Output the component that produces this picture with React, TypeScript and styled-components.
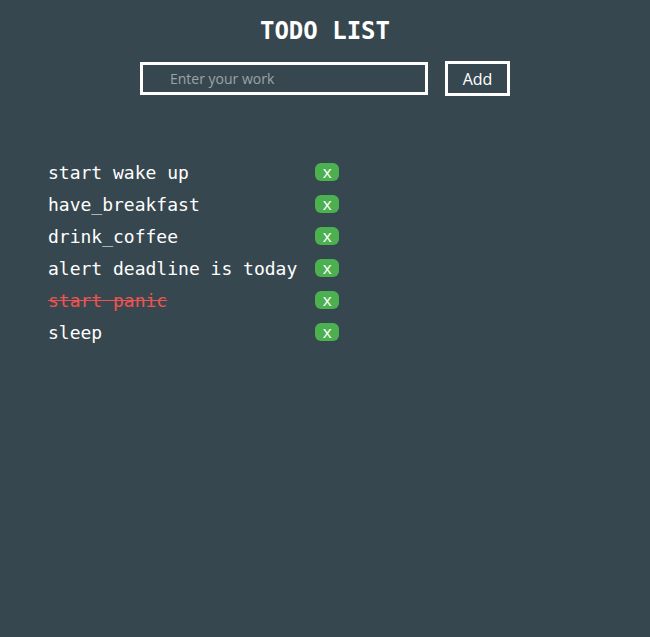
import { useState } from "react";
import styled, { createGlobalStyle } from "styled-components";

const GlobalStyle = createGlobalStyle`
  html, body {
    margin: 0;
    padding: 0;
    background-color: #37474f;
  }
  #root {
    min-height: 100vh;
  }
`;

const Wrapper = styled.div`
  min-height: 100vh;
  background-color: #37474f;
  color: #ffffff;
  display: flex;
  flex-direction: column;
`;

const Title = styled.h1`
  margin: 16px 0 0;
  font-family: "DejaVu Sans Mono", monospace;
  font-size: 24px;
  line-height: 30px;
  font-weight: bold;
  text-align: center;
`;

const Form = styled.form`
  margin-top: 15px;
  display: flex;
  justify-content: center;
  align-items: center;
  gap: 17px;
`;

const Input = styled.input`
  box-sizing: border-box;
  width: 288px;
  height: 33px;
  border: 3px solid #ffffff;
  background: transparent;
  color: #ffffff;
  padding: 0 0 0 27px;
  font-family: "Open Sans", "Noto Sans", sans-serif;
  font-size: 14px;
  outline: none;
  &::placeholder {
    color: #9aa4a8;
  }
`;

const AddBtn = styled.button`
  box-sizing: border-box;
  width: 65px;
  height: 35px;
  border: 3px solid #ffffff;
  background: transparent;
  color: #ffffff;
  font-family: "Open Sans", "Noto Sans", sans-serif;
  font-size: 16px;
  cursor: pointer;
  padding: 0;
`;

const List = styled.ul`
  margin: 60px 0 0;
  padding: 0 0 0 48px;
  list-style: none;
  display: grid;
  grid-template-columns: max-content max-content;
  grid-auto-rows: 32px;
  column-gap: 18px;
  align-items: center;
`;

const Item = styled.li`
  display: contents;
`;

const Label = styled.span<{ $done: boolean }>`
  font-family: "DejaVu Sans Mono", monospace;
  font-size: 18px;
  color: ${(props) => (props.$done ? "#ef5350" : "#ffffff")};
  text-decoration: ${(props) => (props.$done ? "line-through" : "none")};
  cursor: pointer;
`;

const DeleteBtn = styled.button`
  width: 24px;
  height: 18px;
  margin-top: -1px;
  border: none;
  border-radius: 6px;
  background-color: #4caf50;
  color: #ffffff;
  font-family: "Open Sans", "Noto Sans", sans-serif;
  font-size: 17px;
  line-height: 17px;
  padding: 0;
  cursor: pointer;
`;

interface ITodo {
  id: number;
  text: string;
  done: boolean;
}

const initialTodos: ITodo[] = [
  { id: 1, text: "start wake up", done: false },
  { id: 2, text: "have_breakfast", done: false },
  { id: 3, text: "drink_coffee", done: false },
  { id: 4, text: "alert deadline is today", done: false },
  { id: 5, text: "start panic", done: true },
  { id: 6, text: "sleep", done: false },
];

function App() {
  const [todos, setTodos] = useState<ITodo[]>(initialTodos);
  const [value, setValue] = useState("");

  const onSubmit = (e: React.FormEvent) => {
    e.preventDefault();
    if (!value.trim()) return;
    setTodos((prev) => [...prev, { id: Date.now(), text: value, done: false }]);
    setValue("");
  };
  const toggle = (id: number) =>
    setTodos((prev) =>
      prev.map((t) => (t.id === id ? { ...t, done: !t.done } : t))
    );
  const remove = (id: number) =>
    setTodos((prev) => prev.filter((t) => t.id !== id));

  return (
    <Wrapper>
      <GlobalStyle />
      <Title>TODO LIST</Title>
      <Form onSubmit={onSubmit}>
        <Input
          placeholder="Enter your work"
          value={value}
          onChange={(e) => setValue(e.target.value)}
        />
        <AddBtn type="submit">Add</AddBtn>
      </Form>
      <List>
        {todos.map((todo) => (
          <Item key={todo.id}>
            <Label $done={todo.done} onClick={() => toggle(todo.id)}>
              {todo.text}
            </Label>
            <DeleteBtn onClick={() => remove(todo.id)}>x</DeleteBtn>
          </Item>
        ))}
      </List>
    </Wrapper>
  );
}

export default App;
